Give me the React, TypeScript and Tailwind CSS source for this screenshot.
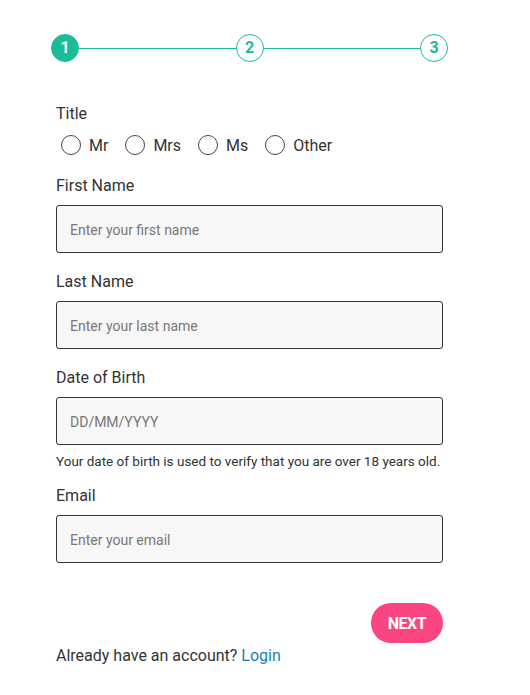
import React, { useState } from 'react';

const steps = [1, 2, 3];
const titles = ['Mr', 'Mrs', 'Ms', 'Other'];

function Field({ label, placeholder, hint }: { label: string; placeholder: string; hint?: string }) {
  return (
    <div className="flex flex-col">
      <label className="pt-[1px] text-[16px] leading-[20px] text-[#333]">{label}</label>
      <input
        placeholder={placeholder}
        className="mt-[9px] h-[48px] w-full rounded-[3px] border border-[#333] bg-[#f7f7f7] px-[13px] pt-[2px] text-[14px] text-[#333] placeholder:text-[#777] outline-none"
      />
      {hint && <p className="mt-[8px] text-[13.5px] leading-[16px] text-[#333]">{hint}</p>}
    </div>
  );
}

export default function App() {
  const [title, setTitle] = useState<string | null>(null);

  return (
    <div className="min-h-screen bg-white font-['Roboto',sans-serif]">
      <div className="w-[387px] ml-[56px] pt-[34px]">
        {/* stepper */}
        <div className="-mx-[5px] flex items-center">
          {steps.map((n, i) => (
            <React.Fragment key={n}>
              {i > 0 && <div className="h-px flex-1 bg-[#1abc9c]" />}
              <div
                className={`flex h-[28px] w-[28px] items-center justify-center rounded-full border border-[#1abc9c] text-[16px] font-bold ${
                  i === 0 ? 'bg-[#1abc9c] text-white' : 'bg-white text-[#1abc9c]'
                }`}
              >
                {n}
              </div>
            </React.Fragment>
          ))}
        </div>

        {/* title */}
        <div className="mt-[41px]">
          <div className="pt-[1px] text-[16px] leading-[20px] text-[#333]">Title</div>
          <div className="mt-[10px] ml-[5px] flex items-center gap-[17px]">
            {titles.map((t) => (
              <label key={t} className="flex cursor-pointer items-center gap-[8px]" onClick={() => setTitle(t)}>
                <span className="flex h-[20px] w-[20px] items-center justify-center rounded-full border-[1.5px] border-[#444]">
                  {title === t && <span className="h-[10px] w-[10px] rounded-full bg-[#1abc9c]" />}
                </span>
                <span className="pt-[2px] text-[16px] leading-[20px] text-[#333]">{t}</span>
              </label>
            ))}
          </div>
        </div>

        <div className="mt-[19px] flex flex-col gap-[18px]">
          <Field label="First Name" placeholder="Enter your first name" />
          <Field label="Last Name" placeholder="Enter your last name" />
          <Field
            label="Date of Birth"
            placeholder="DD/MM/YYYY"
            hint="Your date of birth is used to verify that you are over 18 years old."
          />
          <div className="-mt-[2px]">
            <Field label="Email" placeholder="Enter your email" />
          </div>
        </div>

        <div className="mt-[40px] flex justify-end">
          <button className="h-[40px] w-[72px] rounded-full bg-[#fb4580] pt-[1px] text-[16px] font-bold tracking-[-0.5px] text-white">
            NEXT
          </button>
        </div>

        <p className="mt-[3px] text-[16px] leading-[20px] text-[#333]">
          Already have an account? <a className="text-[#1a7fb0]">Login</a>
        </p>
      </div>
    </div>
  );
}
